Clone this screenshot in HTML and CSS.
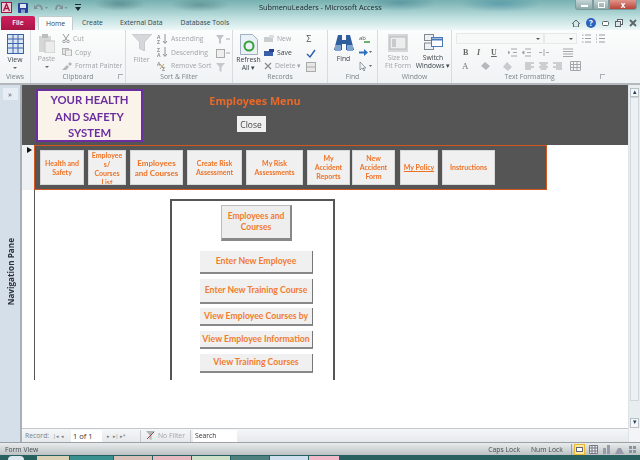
FILE: index.html
```html
<!DOCTYPE html>
<html lang="en">
<head>
<meta charset="utf-8">
<title>SubmenuLeaders - Microsoft Access</title>
<link rel="stylesheet" href="styles.css">
</head>
<body>
<div class="app">
  <header class="titlebar">
    <div class="qat">
      <svg class="ic-app" width="11" height="11" viewBox="0 0 11 11"><rect x=".5" y=".5" width="10" height="10" fill="#f3c9d6" stroke="#a01545"/><path d="M2.5 9 5.5 2 8.500 9M3.800 6.500h3.400" fill="none" stroke="#a01545" stroke-width="1.300"/></svg>
      <svg class="ic-save" width="10" height="10" viewBox="0 0 10 10"><rect width="10" height="10" rx="1" fill="#27409a"/><rect x="2" y="1" width="6" height="4" fill="#dfe8f5"/><rect x="3" y="6.500" width="4" height="3.500" fill="#8a9cc8"/></svg>
      <svg class="ic-undo" width="15" height="8" viewBox="0 0 15 8"><path d="M2 3C4 0 8 1 8 6" fill="none" stroke="#7f8f94" stroke-width="1.500"/><path d="M0 1 4 5H0zM11 3h3l-1.500 2z" fill="#7f8f94"/></svg>
      <svg class="ic-redo" width="14" height="8" viewBox="0 0 14 8"><path d="M7 3C5 0 2 1 2 6" fill="none" stroke="#7f8f94" stroke-width="1.500"/><path d="M9 1 5 5h4zM10.500 3h3L12 5z" fill="#7f8f94"/></svg>
      <svg class="ic-cust" width="6" height="7" viewBox="0 0 6 7"><path d="M0 0h6v1H0zM0 3h6L3 7z" fill="#1d2a30"/></svg>
    </div>
    <div class="doc-title">SubmenuLeaders - Microsoft Access</div>
    <div class="winctl">
      <span class="wc wc-min"><i class="wc-min-bar"></i></span>
      <span class="wc wc-max"><i class="wc-max-box"></i></span>
      <span class="wc wc-close">x</span>
    </div>
  </header>

  <nav class="tabs">
    <div class="tab-file">File</div>
    <div class="tab-home">Home</div>
    <div class="tab tab-create">Create</div>
    <div class="tab tab-ext">External Data</div>
    <div class="tab tab-db">Database Tools</div>
    <div class="help">
      <svg width="8" height="7" viewBox="0 0 8 7"><path d="M0 4 4 0l4 4M1.500 3.500V7h5V3.500" fill="none" stroke="#5a6468"/></svg>
      <span class="help-q">?</span>
      <svg width="7" height="5" viewBox="0 0 7 5"><rect x=".5" y=".5" width="6" height="4" rx="1" fill="#fff" stroke="#5a6468"/></svg>
      <svg width="8" height="8" viewBox="0 0 8 8"><rect x="2.500" y=".5" width="5" height="5" fill="#fff" stroke="#5a6468"/><rect x=".5" y="2.500" width="5" height="5" fill="#dfe5e8" stroke="#5a6468"/></svg>
      <svg width="8" height="8" viewBox="0 0 8 8"><path d="M1 1l6 6M7 1 1 7" stroke="#5a6468" stroke-width="1.800"/></svg>
    </div>
  </nav>

  <section class="ribbon">
    <div class="group g-views">
      <div class="gbody">
        <div class="big">
          <svg class="big-ic" width="17" height="20" viewBox="0 0 17 20"><rect x=".5" y=".5" width="16" height="19" fill="#dbe6f5" stroke="#3a62a8"/><path d="M.5 5h16M.5 9.500h16M.5 14h16M6 .5v19M11 .5v19" stroke="#3a62a8"/></svg>
          <span class="big-t">View</span><i class="caret"></i>
        </div>
      </div>
      <div class="glabel">Views</div>
    </div>

    <div class="group g-clip">
      <div class="gbody">
        <div class="big dim">
          <svg class="big-ic" width="17" height="19" viewBox="0 0 17 19"><rect x="1" y="2" width="12" height="16" fill="#d6d6d6"/><rect x="4" y="0" width="6" height="4" fill="#bdbdbd"/><rect x="7" y="7" width="10" height="12" fill="#ececec" stroke="#c6c6c6"/></svg>
          <span class="big-t">Paste</span><i class="caret"></i>
        </div>
        <div class="smalls dim">
          <div class="si"><svg width="8" height="9" viewBox="0 0 8 9"><path d="M1 0l4 6M7 0 3 6" stroke="#9a9a9a"/><circle cx="2" cy="7.500" r="1.300" fill="none" stroke="#9a9a9a"/><circle cx="6" cy="7.500" r="1.300" fill="none" stroke="#9a9a9a"/></svg>Cut</div>
          <div class="si"><svg width="10" height="8" viewBox="0 0 10 8"><rect x=".5" y=".5" width="6" height="6" fill="#e4e4e4" stroke="#b5b5b5"/><rect x="3.500" y="2" width="6" height="6" fill="#eee" stroke="#b5b5b5"/></svg>Copy</div>
          <div class="si"><svg width="10" height="8" viewBox="0 0 10 8"><path d="M0 8 5 3l2 2-3 3zM6 2l2-2 2 2-2 2z" fill="#b5b5b5"/></svg>Format Painter</div>
        </div>
      </div>
      <div class="glabel">Clipboard<i class="launch"></i></div>
    </div>

    <div class="group g-sort">
      <div class="gbody">
        <div class="big dim">
          <svg class="big-ic" width="20" height="17" viewBox="0 0 20 17"><path d="M0 0h20l-7.500 8v9l-5-2.500V8z" fill="#d4d8da" stroke="#b5babc" stroke-width=".6"/></svg>
          <span class="big-t big-filter">Filter</span>
        </div>
        <div class="smalls dim">
          <div class="si"><svg width="11" height="10" viewBox="0 0 11 10"><path d="M8 0v9M6 7l2 2.500L10 7" fill="none" stroke="#8b9298"/><text x="0" y="4.500" class="az">A</text><text x="0" y="10" class="az">Z</text></svg>Ascending</div>
          <div class="si"><svg width="11" height="10" viewBox="0 0 11 10"><path d="M8 0v9M6 7l2 2.500L10 7" fill="none" stroke="#8b9298"/><text x="0" y="4.500" class="az">Z</text><text x="0" y="10" class="az">A</text></svg>Descending</div>
          <div class="si"><svg width="11" height="10" viewBox="0 0 11 10"><path d="M7 3 3 8M3 3l4 5" stroke="#b8a070"/><text x="0" y="4.500" class="az">A</text><text x="5" y="10" class="az">Z</text></svg>Remove Sort</div>
        </div>
        <div class="sort-side dim">
          <svg width="14" height="9" viewBox="0 0 14 9"><path d="M0 0h8L5 4v5L3 8V4z" fill="#bfc4c6"/><path d="M10 4h4" stroke="#aaa"/></svg>
          <svg width="14" height="9" viewBox="0 0 14 9"><rect x=".5" y=".5" width="8" height="8" fill="#eee" stroke="#aaa"/><path d="M10 4h4" stroke="#aaa"/></svg>
          <svg width="9" height="9" viewBox="0 0 9 9"><path d="M0 0h9L5.500 4v5l-2-1V4z" fill="#c3c8ca"/></svg>
        </div>
      </div>
      <div class="glabel">Sort &amp; Filter</div>
    </div>

    <div class="group g-rec">
      <div class="gbody">
        <div class="big big-refresh">
          <svg class="big-ic" width="18" height="21" viewBox="0 0 18 21"><path d="M.5.5h12l5 5v15H.5z" fill="#e9f0f6" stroke="#9fb0c0"/><circle cx="9" cy="12" r="4.500" fill="none" stroke="#3aa03a" stroke-width="2"/></svg>
          <span class="big-t">Refresh</span><span class="big-t">All ▾</span>
        </div>
        <div class="smalls">
          <div class="si dim"><svg width="10" height="7" viewBox="0 0 10 7"><rect y="2" width="9" height="5" fill="#c8cdd0"/><rect x="5" width="5" height="3" fill="#dadfe2"/></svg>New</div>
          <div class="si dark"><svg width="10" height="7" viewBox="0 0 10 7"><rect y="2" width="9" height="5" fill="#3a5ea8"/><rect x="5" width="5" height="3" fill="#27409a"/></svg>Save</div>
          <div class="si dim"><svg width="8" height="8" viewBox="0 0 8 8"><path d="M1 1l6 6M7 1 1 7" stroke="#888" stroke-width="1.200"/></svg>Delete ▾</div>
        </div>
        <div class="rec-side">
          <span class="sigma">Σ</span>
          <svg width="10" height="10" viewBox="0 0 10 10"><path d="M1 6l3 3 5-7" fill="none" stroke="#2b5fb0" stroke-width="1.400"/></svg>
          <svg width="10" height="10" viewBox="0 0 10 10"><rect x=".5" y=".5" width="9" height="9" fill="#e6e6e6" stroke="#aaa"/><path d="M.5 5h9" stroke="#aaa"/></svg>
        </div>
      </div>
      <div class="glabel">Records</div>
    </div>

    <div class="group g-find">
      <div class="gbody">
        <div class="big">
          <svg class="big-ic" width="20" height="17" viewBox="0 0 20 17"><path d="M4 0h4v5h4V0h4l4 15H12V9H8v6H0z" fill="#2f5d9e"/><rect x="1" y="10" width="6" height="6" fill="#7fa3cf"/><rect x="13" y="10" width="6" height="6" fill="#7fa3cf"/></svg>
          <span class="big-t">Find</span>
        </div>
        <div class="find-side">
          <svg width="11" height="9" viewBox="0 0 11 9"><text x="0" y="6" class="ab">ab</text><path d="M5 8h6" stroke="#3d9a3d" stroke-width="1.500"/></svg>
          <svg width="13" height="7" viewBox="0 0 13 7"><path d="M0 2.500h5V0l4 3.500L5 7V4.500H0z" fill="#2f6fc0"/><path d="M10 2h3l-1.500 2z" fill="#666"/></svg>
          <svg width="13" height="9" viewBox="0 0 13 9"><path d="M1 0v8l2-2 2 3 1-1-2-2h3z" fill="#eef2f6" stroke="#5a6a78" stroke-width=".6"/><path d="M10 3h3l-1.500 2z" fill="#666"/></svg>
        </div>
      </div>
      <div class="glabel">Find</div>
    </div>

    <div class="group g-win">
      <div class="gbody">
        <div class="big dim big-size">
          <svg class="big-ic" width="20" height="18" viewBox="0 0 20 18"><rect width="20" height="18" fill="#d5d8da"/><rect x="2" y="3" width="16" height="12" fill="#eceeee" stroke="#b8b8b8"/><rect x="4" y="5" width="4" height="8" fill="#c8cbcd"/></svg>
          <span class="big-t">Size to</span><span class="big-t">Fit Form</span>
        </div>
        <div class="big big-switch">
          <svg class="big-ic" width="19" height="16" viewBox="0 0 19 16"><rect x=".5" y=".5" width="9" height="6" fill="#eef1f3" stroke="#7d8a94"/><rect x=".5" y="9" width="9" height="6.500" fill="#eef1f3" stroke="#7d8a94"/><rect x="7.500" y="3.500" width="11" height="9" fill="#fff" stroke="#4a78b8"/><path d="M7.500 5.500h11" stroke="#4a78b8" stroke-width="2"/></svg>
          <span class="big-t">Switch</span><span class="big-t">Windows ▾</span>
        </div>
      </div>
      <div class="glabel">Window</div>
    </div>

    <div class="group g-text">
      <div class="gbody tf">
        <div class="tf-row tf-r1">
          <span class="combo combo-font"><i class="combo-arrow"></i></span>
          <span class="combo combo-size"><i class="combo-arrow"></i></span>
          <svg width="9" height="9" viewBox="0 0 9 9"><path d="M3 1h6M3 4.500h6M3 8h6M0 1h1.500M0 4.500h1.500M0 8h1.500" stroke="#9a9fa2"/></svg>
          <svg width="9" height="9" viewBox="0 0 9 9"><path d="M3 1h6M3 4.500h6M3 8h6M0 0v2.500M0 3.500v2.500M0 7v2" stroke="#9a9fa2"/></svg>
        </div>
        <div class="tf-row tf-r2">
          <b class="fmt">B</b><i class="fmt">I</i><u class="fmt">U</u>
          <svg class="m-ind" width="9" height="9" viewBox="0 0 9 9"><path d="M3 1h6M5 4.500h4M3 8h6M0 3v3l2-1.500z" stroke="#a4a8aa" fill="#a4a8aa"/></svg>
          <svg class="m-ind2" width="9" height="9" viewBox="0 0 9 9"><path d="M3 1h6M5 4.500h4M3 8h6M2 3v3L0 4.500z" stroke="#a4a8aa" fill="#a4a8aa"/></svg>
          <svg class="m-dir" width="10" height="7" viewBox="0 0 10 7"><path d="M5 0v7M0 3.500h3M7 3.500h3" stroke="#a4a8aa"/></svg>
          <svg class="m-lines" width="12" height="9" viewBox="0 0 12 9"><path d="M0 1h10M0 3.500h10M0 6h10M0 8.500h10" stroke="#a4a8aa"/></svg>
        </div>
        <div class="tf-row tf-r3">
          <span class="fmt-a">A</span>
          <svg class="m-hi" width="10" height="8" viewBox="0 0 10 8"><path d="M0 4 4 0l5 4-4 4z" fill="#b4b8ba"/></svg>
          <svg class="m-fill" width="10" height="9" viewBox="0 0 10 9"><path d="M4 0 9 5 5 9 0 5z" fill="#c8cccf"/></svg>
          <svg class="m-al" width="9" height="8" viewBox="0 0 9 8"><path d="M0 1h9M0 3h6M0 5h9M0 7h6" stroke="#a4a8aa"/></svg>
          <svg class="m-al2" width="9" height="8" viewBox="0 0 9 8"><path d="M0 1h9M1.500 3h6M0 5h9M1.500 7h6" stroke="#a4a8aa"/></svg>
          <svg class="m-al2" width="9" height="8" viewBox="0 0 9 8"><path d="M0 1h9M3 3h6M0 5h9M3 7h6" stroke="#a4a8aa"/></svg>
          <svg class="m-grid" width="11" height="10" viewBox="0 0 11 10"><path d="M.5.500h10v9H.5zM3.500.5v9M7 .5v9M.5 3.500h10M.5 6.500h10" fill="none" stroke="#a4a8aa"/></svg>
        </div>
      </div>
      <div class="glabel">Text Formatting<i class="launch"></i></div>
    </div>
  </section>

  <main class="main">
    <aside class="navpane">
      <div class="nav-btn">»</div>
      <div class="nav-label">Navigation Pane</div>
    </aside>

    <div class="content">
      <div class="form-head">
        <div class="logo">YOUR HEALTH AND SAFETY SYSTEM</div>
        <div class="head-col">
          <h1 class="menu-title">Employees Menu</h1>
          <button class="close-btn">Close</button>
        </div>
      </div>

      <div class="form-row">
        <div class="selector"><i class="sel-arrow"></i></div>
        <div class="subnav">
          <div class="nb w44">Health and Safety</div>
          <div class="nb w38 nb-clip">Employee s/ Courses List</div>
          <div class="nb w53 nb-big">Employees and Courses</div>
          <div class="nb w55">Create Risk Assessment</div>
          <div class="nb w57">My Risk Assessments</div>
          <div class="nb w43">My Accident Reports</div>
          <div class="nb w43 tight">New Accident Form</div>
          <div class="nb w38 under">My Policy</div>
          <div class="nb w53 instr">Instructions</div>
        </div>
      </div>

      <div class="detail">
        <div class="detail-rule">
          <div class="panel">
            <div class="pb-title">Employees and Courses</div>
            <div class="pb h23">Enter New Employee</div>
            <div class="pb h25">Enter New Training Course</div>
            <div class="pb h18">View Employee Courses by</div>
            <div class="pb h18">View Employee Information</div>
            <div class="pb h19">View Training Courses</div>
          </div>
        </div>
      </div>

      <div class="recbar">
        <span class="rb-label">Record:</span>
        <span class="rb-nav">|◂ &nbsp;◂</span>
        <span class="rb-cur">1 of 1</span>
        <span class="rb-nav rb-next">▸ &nbsp;▸| ▸*</span>
        <span class="rb-filter">
          <svg width="9" height="9" viewBox="0 0 9 9"><path d="M0 0h9L5.500 4v5l-2-1V4z" fill="#aeb4b8"/><path d="M1 8 8 1" stroke="#b04040"/></svg>No Filter</span>
        <span class="rb-search">Search</span>
      </div>
    </div>

    <div class="vscroll">
      <div class="sb-btn">▴</div>
      <div class="sb-track"><div class="sb-thumb"></div></div>
      <div class="sb-btn sb-down">▾</div>
      <div class="sb-gap"></div>
    </div>
  </main>

  <footer class="status">
    <span class="st-left">Form View</span>
    <span class="st-key st-caps">Caps Lock</span>
    <span class="st-key st-num">Num Lock</span>
    <div class="st-views">
      <svg class="st-on" width="11" height="11" viewBox="0 0 11 11"><rect x=".5" y=".5" width="10" height="10" fill="#ffe9a0" stroke="#e8b830"/><rect x="2.500" y="3.500" width="6" height="4" fill="#fff" stroke="#667"/></svg>
      <svg width="9" height="9" viewBox="0 0 9 9"><path d="M.5.5h8v8h-8zM.5 3h8M.5 6h8M3 .5v8M6 .5v8" fill="#eee" stroke="#778"/></svg>
      <svg width="9" height="9" viewBox="0 0 9 9"><path d="M1 3h3v6H1zM5 0h3v9H5z" fill="#99a" /></svg>
      <svg width="9" height="9" viewBox="0 0 9 9"><path d="M0 9 3 3h3l3 6z" fill="#99a"/></svg>
      <svg width="9" height="9" viewBox="0 0 9 9"><path d="M1 1h3v3H1zM5 1h3v3H5zM1 5h3v3H1zM5 5h3v3H5z" fill="#8a93a0"/></svg>
      <svg width="9" height="9" viewBox="0 0 9 9"><path d="M1 0v8h8M2 7l6-6" fill="none" stroke="#667" stroke-width="1.200"/></svg>
    </div>
  </footer>

  <div class="taskbar">
    <i class="tb-orb"></i><i class="tb-b tb1"></i><i class="tb-b tb2"></i><i class="tb-b tb3"></i><i class="tb-b tb4"></i><i class="tb-b tb5"></i><i class="tb-b tb6"></i><i class="tb-b tb7"></i><i class="tb-b tb8"></i>
  </div>
</div>
</body>
</html>
```

FILE: styles.css
```css
* { box-sizing: border-box; }
html, body { margin: 0; padding: 0; }
body { width: 640px; height: 460px; overflow: hidden; background: #fff; font-family: "Open Sans", "Noto Sans", sans-serif; }
.app { width: 640px; height: 460px; display: flex; flex-direction: column; overflow: hidden; font-size: 7px; color: #3c4448; filter: blur(.3px); }
svg { display: block; flex: none; }

.titlebar { height: 16px; display: flex; align-items: flex-start; background:
  radial-gradient(ellipse 26px 7px at 120px 4px, rgba(50,100,105,.45), transparent),
  radial-gradient(ellipse 30px 7px at 200px 5px, rgba(50,100,105,.4), transparent),
  radial-gradient(ellipse 36px 8px at 400px 3px, rgba(40,110,130,.4), transparent),
  radial-gradient(ellipse 40px 8px at 500px 4px, rgba(40,120,150,.4), transparent),
  linear-gradient(180deg, #76b0b0 0, #b7dada 100%); position: relative; }
.qat { display: flex; align-items: center; padding: 2px 0 0 1px; }
.ic-save { margin-left: 6px; }
.ic-undo { margin-left: 6px; }
.ic-redo { margin-left: 5px; }
.ic-cust { margin-left: 7px; }
.doc-title { margin-left: 178px; padding-top: 2px; font-size: 7.300px; line-height: 11px; color: #182226; white-space: nowrap; }
.winctl { margin-left: auto; margin-right: 3px; display: flex; height: 10px; }
.wc { display: flex; align-items: center; justify-content: center; height: 10px; border: 1px solid #7c9a9c; border-top: 0; background: linear-gradient(#c4d4d4, #8eaaab); }
.wc-min { width: 18px; border-radius: 0 0 0 3px; }
.wc-max { width: 16px; }
.wc-close { width: 28px; border-radius: 0 0 3px 0; background: linear-gradient(#e2958a, #b8443a); color: #fff; font-weight: 700; font-size: 8px; line-height: 8px; }
.wc-min-bar { width: 7px; height: 2px; background: #fff; margin-top: 3px; }
.wc-max-box { width: 7px; height: 6px; border: 1.500px solid #fff; }

.tabs { height: 14px; display: flex; align-items: stretch; background: linear-gradient(#b9dcdc, #eef7f7); position: relative; font-size: 6.800px; color: #33474c; }
.tab-file { width: 34px; margin-left: 1px; background: linear-gradient(#d21e5c, #a81745); color: #fff; font-weight: 600; text-align: center; line-height: 14px; border-radius: 2px 2px 0 0; }
.tab-home { width: 35px; margin-left: 3px; background: #fcfdfd; border: 1px solid #c2cbcd; border-bottom: 0; text-align: center; line-height: 13px; border-radius: 2px 2px 0 0; }
.tab { line-height: 14px; white-space: nowrap; }
.tab-create { margin-left: 9px; }
.tab-ext { margin-left: 17px; }
.tab-db { margin-left: 18px; }
.help { margin-left: auto; margin-right: 3px; display: flex; align-items: center; gap: 6px; }
.help-q { width: 10px; height: 10px; border-radius: 50%; background: #2b62c0; color: #fff; font-weight: 700; font-size: 8px; line-height: 10px; text-align: center; }

.ribbon { height: 55px; display: flex; background: linear-gradient(#fbfcfc, #f0f3f4); border-bottom: 2px solid #b4b8bc; }
.group { display: flex; flex-direction: column; border-right: 1px solid #d8dcde; position: relative; }
.gbody { flex: 1; display: flex; min-height: 0; }
.glabel { height: 11px; line-height: 10px; text-align: center; font-size: 6.800px; color: #7a8488; position: relative; }
.launch { position: absolute; right: 2px; top: 2px; width: 5px; height: 5px; border: 1px solid #a8aeb2; border-width: 1px 0 0 1px; }
.g-views { width: 31px; }
.g-clip { width: 95px; }
.g-sort { width: 107px; }
.g-rec { width: 95px; }
.g-find { width: 50px; }
.g-win { width: 74px; }
.g-text { width: 155px; border-right: 0; }

.big { display: flex; flex-direction: column; align-items: center; padding-top: 4px; font-size: 6.800px; line-height: 8px; color: #3c4448; }
.big-ic { margin-bottom: 2px; }
.big-t { white-space: nowrap; }
.caret { width: 0; height: 0; margin-top: 3px; border: 2px solid transparent; border-top-color: #666; border-bottom: 0; }
.dim, .dim .big-t { color: #a0a4a8; }
.dark { color: #3c4448; }
.g-views .big { width: 31px; }
.g-clip .big { width: 31px; }
.smalls { display: flex; flex-direction: column; padding-top: 4px; gap: 4.500px; }
.si { display: flex; align-items: center; height: 9px; gap: 3px; white-space: nowrap; font-size: 6.800px; }
.g-sort .big { width: 31px; }
.big-filter { margin-top: 3px; }
.sort-side { display: flex; flex-direction: column; gap: 5px; padding: 5px 0 0 5px; }
.az { font: 700 5px "Open Sans", sans-serif; fill: #8b9298; }
.ab { font: 6px "Open Sans", sans-serif; fill: #555; }
.big-refresh { width: 31px; padding-top: 4px; }
.big-refresh .big-ic { margin-bottom: 1px; }
.rec-side { display: flex; flex-direction: column; gap: 4px; padding: 4px 0 0 5px; }
.sigma { font-size: 9px; line-height: 10px; color: #555; }
.g-find .big { width: 31px; padding-top: 5px; }
.g-find .big-ic { margin-bottom: 3px; }
.find-side { display: flex; flex-direction: column; gap: 6px; padding-top: 4px; }
.big-size { width: 34px; margin-left: 3px; }
.big-switch { width: 36px; }
.big-switch .big-ic { margin-bottom: 4px; }

.tf { flex-direction: column; padding: 3px 0 0 4px; gap: 2px; }
.tf-row { display: flex; align-items: center; }
.tf-r1 { height: 11px; gap: 5px; }
.tf-r2 { height: 12px; padding: 1px 0 0 7px; }
.tf-r3 { height: 12px; padding-left: 6px; }
.combo { display: block; height: 11px; background: #f7f8f8; border: 1px solid #e6e9ea; position: relative; }
.combo-font { width: 88px; }
.combo-size { width: 33px; margin-left: -5px; }
.combo-arrow { position: absolute; right: 3px; top: 4px; border: 2px solid transparent; border-top-color: #555; border-bottom: 0; }
.fmt { font: 700 8px "Liberation Serif", serif; color: #666; width: 7px; margin-right: 7px; }
i.fmt { font-style: italic; }
.m-ind { margin-left: 3px; }
.m-ind2 { margin-left: 5px; }
.m-dir { margin-left: 8px; }
.m-lines { margin-left: 14px; }
.fmt-a { font: 9px "Liberation Serif", serif; color: #777; }
.m-hi { margin-left: 12px; }
.m-fill { margin-left: 12px; }
.m-al { margin-left: 12px; }
.m-al2 { margin-left: 5px; }
.m-grid { margin-left: 8px; }

.main { height: 357px; display: flex; min-height: 0; }
.navpane { width: 22px; background: #d5dfea; border-right: 2px solid #a9afb4; display: flex; flex-direction: column; align-items: center; }
.nav-btn { width: 15px; height: 12px; margin-top: 3px; background: #e7edf4; font-size: 8px; line-height: 11px; text-align: center; color: #556; }
.nav-label { margin-top: 138px; writing-mode: vertical-rl; transform: rotate(180deg); font-weight: 700; font-size: 8.200px; color: #2c3238; white-space: nowrap; }

.content { width: 606px; display: flex; flex-direction: column; }
.form-head { height: 60px; background: #555; display: flex; }
.logo { width: 107px; height: 53px; margin: 4px 0 0 14px; border: 2px solid #6a2ea0; background: #faf3e9; color: #6a2ea0; font: 700 11.300px/16.500px Lato, sans-serif; text-align: center; padding: 1px 5px 0; }
.head-col { display: flex; flex-direction: column; align-items: center; margin-left: 67px; width: 90px; }
.menu-title { margin: 9px 0 0; font: 700 10.800px/14px "Open Sans", sans-serif; color: #e8692a; white-space: nowrap; }
.close-btn { width: 29px; height: 16px; margin: 8px 8px 0 0; padding: 0; border: 0; background: #f0f0f0; font: 8.500px "Open Sans", sans-serif; color: #444; }

.form-row { height: 45px; display: flex; background: #fff; }
.selector { width: 12px; background: #eef1f3; position: relative; }
.sel-arrow { position: absolute; left: 5px; top: 2px; border: 3px solid transparent; border-left: 5px solid #111; border-right: 0; }
.subnav { width: 513px; height: 45px; background: #555; border: 1px solid #d2571e; display: flex; align-items: flex-start; gap: 4px; padding: 4px 5px; }
.nb { flex: none; height: 35px; background: #f0f0f0; border: 1px solid #d8d8d8; color: #ee7226; font: 700 7px/9px Lato, sans-serif; text-align: center; display: flex; align-items: center; justify-content: center; padding: 0 2px; overflow: hidden; }
.w44 { width: 44px; } .w38 { width: 38px; } .w53 { width: 53px; } .w55 { width: 55px; } .w57 { width: 57px; } .w43 { width: 43px; }
.tight { margin-left: -2px; }
.nb-clip { align-items: flex-start; }
.nb-big { font-size: 8px; line-height: 10px; }
.under { text-decoration: underline; margin-left: 1px; }
.instr { align-items: flex-start; padding-top: 12px; }

.detail { flex: 1; background: #fff; min-height: 0; }
.detail-rule { height: 190px; margin-left: 12px; border-left: 1px solid #555; padding: 9px 0 0 135px; }
.panel { width: 165px; height: 181px; border: 2px solid #555; border-bottom: 0; padding-left: 8px; display: flex; flex-direction: column; align-items: center; }
.pb-title { width: 71px; height: 36px; margin: 4px 0 10px; background: #eee; border: 1px solid #bbb; border-right: 2px solid #888; border-bottom: 3px solid #888; color: #f07c2e; font: 700 8.500px/11px Lato, sans-serif; text-align: center; display: flex; align-items: center; justify-content: center; flex: none; }
.pb { width: 113px; background: #f0f0f0; border-right: 1px solid #777; border-bottom: 2px solid #888; color: #f07c2e; font: 700 8.700px/1 Lato, sans-serif; white-space: nowrap; display: flex; align-items: center; justify-content: center; flex: none; }
.h23 { height: 23px; margin-bottom: 5px; }
.h25 { height: 25px; margin-bottom: 4px; }
.h18 { height: 18px; margin-bottom: 5px; }
.h19 { height: 19px; }

.recbar { height: 14px; background: linear-gradient(#f4f6f7, #e6eaec); border-top: 1px solid #c4c8cc; display: flex; align-items: center; font-size: 6.800px; color: #7a8086; white-space: nowrap; }
.rb-label { margin-left: 3px; width: 25px; }
.rb-nav { width: 18px; margin-left: 3px; font-size: 5px; color: #777; }
.rb-cur { width: 31px; height: 12px; padding-left: 2px; background: #fff; color: #333; line-height: 12px; font-size: 7.500px; }
.rb-next { width: 28px; margin-left: 5px; }
.rb-filter { display: flex; align-items: center; gap: 3px; margin-left: 5px; padding: 0 5px; height: 12px; border-left: 1px solid #c8ccd0; border-right: 1px solid #c8ccd0; color: #a0a4a8; }
.rb-search { width: 44px; height: 12px; margin-left: 2px; padding-left: 2px; background: #fff; color: #333; line-height: 12px; }

.vscroll { width: 12px; background: #e8edf0; display: flex; flex-direction: column; align-items: center; border-left: 1px solid #dde2e6; }
.sb-btn { width: 9px; height: 9px; margin-top: 3px; background: #f4f6f8; border: 1px solid #b8c0c8; color: #2c3a60; font-size: 7px; line-height: 6px; text-align: center; flex: none; }
.sb-track { flex: 1; width: 9px; display: flex; flex-direction: column; }
.sb-thumb { width: 9px; height: 304px; background: #eef1f3; border: 1px solid #d0d6da; }
.sb-down { margin-top: 0; height: 10px; }
.sb-gap { height: 14px; background: #f2f4f5; width: 11px; flex: none; }

.status { height: 13px; display: flex; align-items: center; background: linear-gradient(#e8ecec, #bcc2c4); border-top: 1px solid #9aa0a4; font-size: 6.800px; color: #444c50; white-space: nowrap; }
.st-left { margin-left: 5px; }
.st-caps { margin-left: 450px; }
.st-num { margin-left: 11px; }
.st-views { display: flex; align-items: center; gap: 4px; margin-left: 8px; padding-left: 2px; border-left: 1px solid #9aa0a4; }
.taskbar { height: 5px; flex: none; background: #27605f; display: flex; gap: 1px; align-items: flex-end; }
.tb-orb { width: 16px; height: 4px; margin-left: 8px; background: #dfe8ee; border-radius: 8px 8px 0 0; }
.tb-b { height: 4px; width: 38px; background: #8fb3b3; }
.tb1 { margin-left: 12px; width: 32px; background: #d9d0b5; }
.tb2 { background: #3a8f8f; width: 43px; }
.tb3 { background: #d8c0b8; }
.tb4 { background: #e8b8c0; }
.tb5 { background: #cfe0c8; }
.tb6 { background: #4f8080; }
.tb7 { background: #cfdff0; }
.tb8 { background: #f0b8c8; width: 30px; }
```
